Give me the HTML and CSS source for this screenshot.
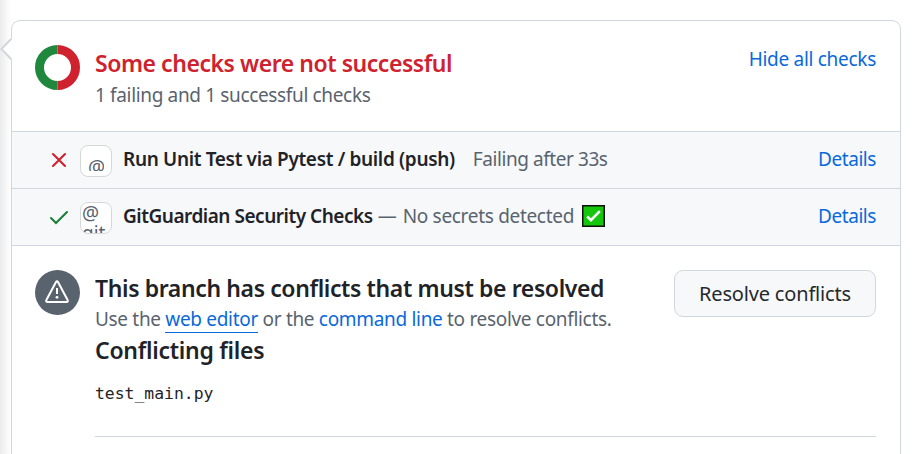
FILE: index.html
```html
<!DOCTYPE html>
<html lang="en">
<head>
<meta charset="utf-8">
<title>Merge status</title>
<link rel="stylesheet" href="styles.css">
</head>
<body>
<main class="page">
  <section class="card">
    <svg class="pointer" viewBox="0 0 12 22" width="12" height="22"><path d="M12 0H11.500L1.500 11L11.500 21.500H12Z" fill="#fff"/><path d="M11.500 .5L1.500 11L11.500 21.500" fill="none" stroke="#d0d7de" stroke-width="2"/></svg>
    <header class="summary">
      <svg class="status-icon" viewBox="0 0 45 45" width="45" height="45"><path d="M22.500 4.500a18 18 0 0 1 0 36" fill="none" stroke="#cf222e" stroke-width="9"/><path d="M22.500 40.500a18 18 0 0 1 0-36" fill="none" stroke="#1f883d" stroke-width="9"/></svg>
      <div class="grow">
        <h3 class="heading failing">Some checks were not successful</h3>
        <p class="muted counts">1 failing and 1 successful checks</p>
      </div>
      <a class="link toggle">Hide all checks</a>
    </header>
    <div class="check">
      <svg class="mark" viewBox="0 0 22 22" width="22" height="22"><path d="M5 5L17 17M17 5L5 17" fill="none" stroke="#cf222e" stroke-width="2.100" stroke-linecap="round"/></svg>
      <span class="avatar padded"><span class="alt">@</span></span>
      <strong class="name workflow">Run Unit Test via Pytest / build (push)</strong>
      <span class="muted after">Failing after 33s</span>
      <a class="link details">Details</a>
    </div>
    <div class="check">
      <svg class="mark" viewBox="0 0 22 22" width="22" height="22"><path d="M3 12L8 17L19 6" fill="none" stroke="#1a7f37" stroke-width="2.100" stroke-linecap="round"/></svg>
      <span class="avatar"><span class="alt">@<br>git</span></span>
      <strong class="name guardian">GitGuardian Security Checks</strong>
      <span class="muted dash">—</span>
      <span class="muted secrets">No secrets detected</span>
      <svg class="emoji" viewBox="0 0 23 22" width="23" height="22"><path d="M.75 .75H22.250V21.250H.75Z" fill="#16c60c" stroke="#101010" stroke-width="1.500"/><path d="M5.200 11.500L9 15.200L17.800 6.200" fill="none" stroke="#fff" stroke-width="2.600"/></svg>
      <a class="link details">Details</a>
    </div>
    <div class="conflicts">
      <svg class="status-icon" viewBox="0 0 45 45" width="45" height="45"><circle cx="22.500" cy="22.500" r="22.500" fill="#59636e"/><path d="M21 12Q22 10.300 23 12L32.600 30Q33.400 32 31.500 32H12.500Q10.600 32 11.400 30Z" fill="none" stroke="#fff" stroke-width="2"/><path d="M22 18V24" stroke="#fff" stroke-width="2"/><circle cx="22" cy="27.300" r="1.400" fill="#fff"/></svg>
      <div class="grow">
        <div class="top">
          <div>
            <h3 class="heading branch">This branch has conflicts that must be resolved</h3>
            <p class="muted hint">Use the <a class="link underlined">web editor</a> or the <a class="link">command line</a> to resolve conflicts.</p>
          </div>
          <button class="button">Resolve conflicts</button>
        </div>
        <h3 class="heading files">Conflicting files</h3>
        <code class="file">test_main.py</code>
        <hr class="rule">
      </div>
    </div>
  </section>
</main>
</body>
</html>
```
FILE: styles.css
```css
* { box-sizing: border-box; }
body { margin: 0; background: #fff; color: #1f2328; font-family: "Noto Sans", "Open Sans", sans-serif; font-size: 19px; line-height: 30px; overflow: hidden; }
h3, p { margin: 0; }
.page { height: 454px; padding: 20px 15px 0 11px; background: linear-gradient(to right, #ebebeb 0, #fff 11px); overflow: hidden; }
.card { position: relative; width: 890px; height: 460px; border: 1px solid #d0d7de; border-radius: 9px; background: #fff; }
.pointer { position: absolute; left: -12px; top: 17px; }
.summary { display: flex; height: 110px; padding: 24px 24px 0 23px; }
.status-icon { flex: none; margin-right: 15px; }
.grow { flex: 1; min-width: 0; }
.heading { font-size: 23px; font-weight: 600; line-height: 34px; white-space: nowrap; }
.summary .heading { padding-top: 1px; }
.failing { color: #cf222e; letter-spacing: -0.450px; }
.muted { color: #59636e; white-space: nowrap; }
.counts { letter-spacing: -0.350px; }
.link { color: #0969da; }
.toggle { margin-top: -1px; letter-spacing: -0.290px; }
.check { display: flex; align-items: center; height: 57px; padding: 0 24px 0 36px; background: #f6f8fa; border-top: 1px solid #d0d7de; white-space: nowrap; line-height: 28px; }
.mark { flex: none; margin-right: 10px; }
.avatar { flex: none; width: 32px; height: 32px; margin: 1px 11px 0 0; border: 1px solid #d5d8db; border-radius: 8px; background: #fff; overflow: hidden; }
.alt { display: block; height: 30px; padding-left: 1px; color: #59636e; font-size: 19px; line-height: 20px; overflow: hidden; }
.padded { padding: 7px; }
.padded .alt { height: 18px; padding: 4px 0 0; }
.name, .after, .dash, .secrets, .details { margin-bottom: 2px; }
.name { font-weight: 600; }
.workflow { letter-spacing: -0.340px; }
.guardian { letter-spacing: -0.480px; }
.after { margin-left: 18px; letter-spacing: -0.430px; }
.details { margin-left: auto; letter-spacing: -0.430px; }
.dash { margin-left: 5px; margin-right: 6px; }
.secrets { letter-spacing: -0.310px; }
.emoji { margin-left: 8px; margin-bottom: 2px; }
.conflicts { display: flex; padding: 24px 24px 0 23px; border-top: 1px solid #d0d7de; }
.top { display: flex; justify-content: space-between; height: 63px; }
.branch { position: relative; top: 1px; letter-spacing: -0.380px; }
.hint { letter-spacing: -0.320px; }
.button { flex: none; width: 202px; height: 47px; padding: 1px 0 0; border: 1px solid #d0d7de; border-radius: 9px; background: #f6f8fa; color: #25292e; font: inherit; font-size: 20px; letter-spacing: -0.170px; }
.underlined { display: inline-block; line-height: 25px; border-bottom: 1px solid #0969da; }
.files { letter-spacing: -0.270px; }
.file { display: block; margin-top: 12px; font-family: "DejaVu Sans Mono", monospace; font-size: 16.400px; }
.rule { height: 1px; margin: 27px 0 0; border: 0; background: #d0d7de; }
```
